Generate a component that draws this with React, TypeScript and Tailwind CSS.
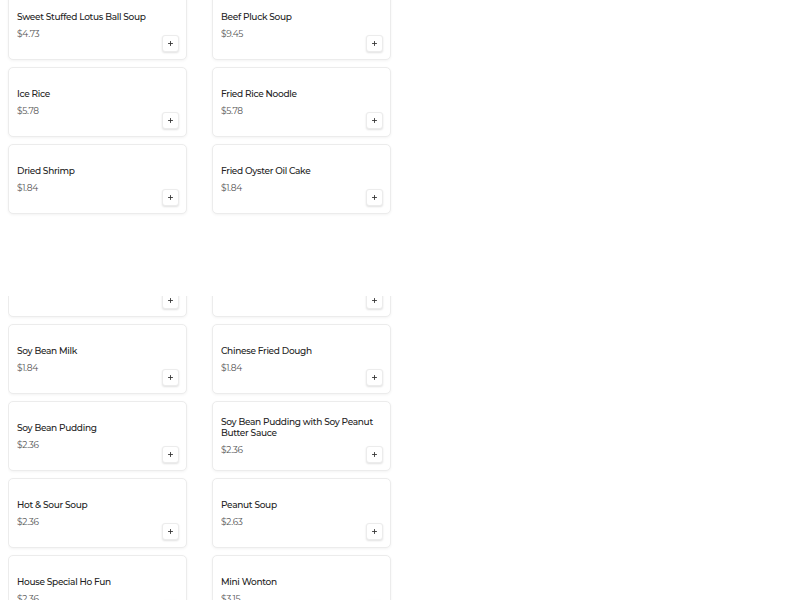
import { Plus } from "lucide-react";

type MenuItem = {
  name: string;
  price: string;
};

const topRows: MenuItem[][] = [
  [
    { name: "Sweet Stuffed Lotus Ball Soup", price: "$4.73" },
    { name: "Beef Pluck Soup", price: "$9.45" },
  ],
  [
    { name: "Ice Rice", price: "$5.78" },
    { name: "Fried Rice Noodle", price: "$5.78" },
  ],
  [
    { name: "Dried Shrimp", price: "$1.84" },
    { name: "Fried Oyster Oil Cake", price: "$1.84" },
  ],
];

const bottomRows: MenuItem[][] = [
  [
    { name: "Soy Bean Milk", price: "$1.84" },
    { name: "Chinese Fried Dough", price: "$1.84" },
  ],
  [
    { name: "Soy Bean Pudding", price: "$2.36" },
    { name: "Soy Bean Pudding with Soy Peanut Butter Sauce", price: "$2.36" },
  ],
  [
    { name: "Hot & Sour Soup", price: "$2.36" },
    { name: "Peanut Soup", price: "$2.63" },
  ],
  [
    { name: "House Special Ho Fun", price: "$2.36" },
    { name: "Mini Wonton", price: "$3.15" },
  ],
];

function AddButton() {
  return (
    <button className="absolute bottom-[7px] right-[7px] flex h-[17px] w-[17px] items-center justify-center rounded-[3px] border border-[#ececec] bg-white shadow-[0_1px_2px_rgba(0,0,0,0.12)]">
      <Plus size={7} strokeWidth={3} className="text-[#333]" />
    </button>
  );
}

function ItemCard({ item }: { item?: MenuItem }) {
  return (
    <div className="relative flex h-[70px] w-[179px] shrink-0 flex-col justify-center rounded-[5px] border border-[#ececec] bg-white pl-[8px] pr-[14px] shadow-[0_1px_3px_rgba(0,0,0,0.05)]">
      {item && (
        <>
          <p className="text-[9px] font-medium leading-[11px] tracking-[-0.3px] text-[#222]">{item.name}</p>
          <p className="mt-[6px] text-[9px] leading-[12px] tracking-[-0.3px] text-[#555]">{item.price}</p>
        </>
      )}
      <AddButton />
    </div>
  );
}

function Row({ items }: { items: MenuItem[] }) {
  return (
    <div className="flex gap-[25px]">
      {items.map((item) => (
        <ItemCard key={item.name} item={item} />
      ))}
    </div>
  );
}

export default function App() {
  return (
    <div className="h-[600px] w-[800px] overflow-hidden bg-white pl-[8px] font-['Montserrat','Open_Sans',sans-serif]">
      {/* first section, scrolled partly off the top */}
      <div className="-mt-[10px] flex flex-col gap-[7px]">
        {topRows.map((row, i) => (
          <Row key={i} items={row} />
        ))}
      </div>

      {/* second section, its first row clipped by the header area */}
      <div className="mt-[82px] overflow-hidden">
        <div className="-mt-[49px] flex flex-col gap-[7px]">
          <div className="flex gap-[25px]">
            <ItemCard />
            <ItemCard />
          </div>
          {bottomRows.map((row, i) => (
            <Row key={i} items={row} />
          ))}
        </div>
      </div>
    </div>
  );
}
